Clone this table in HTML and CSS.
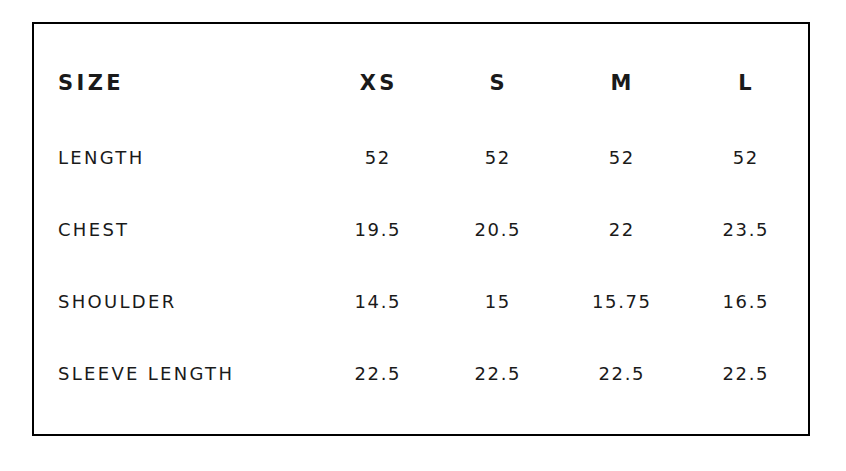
FILE: index.html
```html
<!DOCTYPE html>
<html>
<head>
<meta charset="utf-8">
<link rel="stylesheet" href="styles.css">
</head>
<body>
<div class="chart">
  <div class="grid">
    <div class="cell head label">SIZE</div>
    <div class="cell head">XS</div>
    <div class="cell head">S</div>
    <div class="cell head">M</div>
    <div class="cell head">L</div>

    <div class="cell label">LENGTH</div>
    <div class="cell">52</div>
    <div class="cell">52</div>
    <div class="cell">52</div>
    <div class="cell">52</div>

    <div class="cell label">CHEST</div>
    <div class="cell">19.5</div>
    <div class="cell">20.5</div>
    <div class="cell">22</div>
    <div class="cell">23.5</div>

    <div class="cell label">SHOULDER</div>
    <div class="cell">14.5</div>
    <div class="cell">15</div>
    <div class="cell">15.75</div>
    <div class="cell">16.5</div>

    <div class="cell label">SLEEVE LENGTH</div>
    <div class="cell">22.5</div>
    <div class="cell">22.5</div>
    <div class="cell">22.5</div>
    <div class="cell">22.5</div>
  </div>
</div>
</body>
</html>
```

FILE: styles.css
```css
html, body {
  margin: 0;
  padding: 0;
  background: #fff;
}
body {
  padding: 22px 0 0 32px;
  font-family: "DejaVu Sans", sans-serif;
  color: #1a1a1a;
}
.chart {
  box-sizing: border-box;
  width: 778px;
  height: 414px;
  border: 2px solid #000;
  padding: 20px 0 0 24px;
}
.grid {
  display: grid;
  grid-template-columns: 259px 120px 120px 128px 120px;
  grid-auto-rows: 72px;
  grid-template-rows: 77px;
}
.cell {
  display: flex;
  align-items: center;
  justify-content: center;
  font-size: 18px;
  letter-spacing: 1.6px;
  padding-left: 1.6px;
  font-weight: 400;
}
.label {
  justify-content: flex-start;
  letter-spacing: 2.3px;
  padding-left: 0;
}
.head {
  font-weight: 700;
  font-size: 21px;
  letter-spacing: 3.4px;
  padding-left: 3.4px;
}
.head.label {
  padding-left: 0;
}
```
